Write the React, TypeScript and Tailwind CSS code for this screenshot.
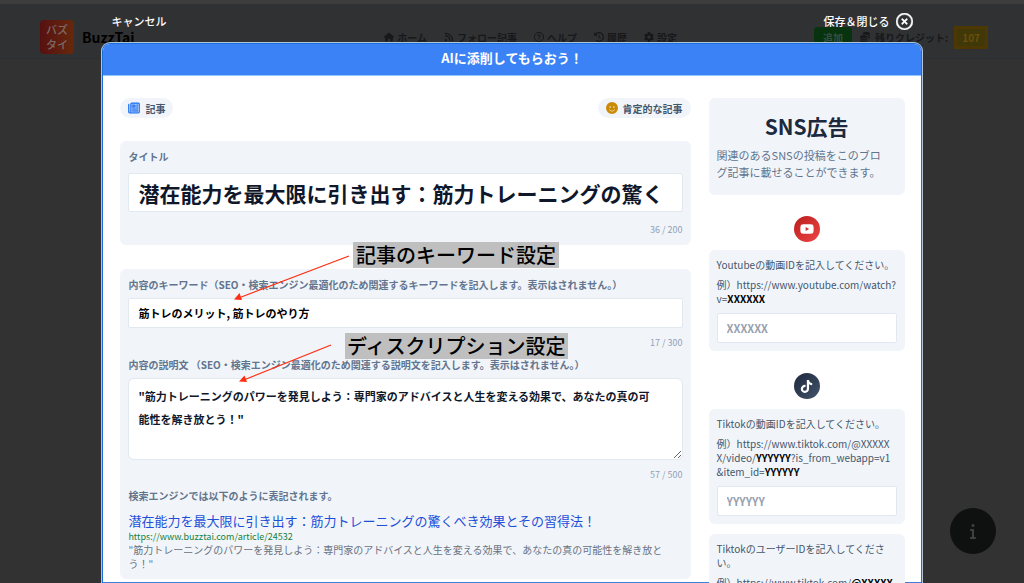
import type { ReactNode } from 'react'
import {
  FaCoins,
  FaGear,
  FaClockRotateLeft,
  FaHouse,
  FaInfo,
  FaRegCircleQuestion,
  FaRegCircleXmark,
  FaRegNewspaper,
  FaRss,
  FaFaceSmile,
  FaTiktok,
  FaYoutube,
} from 'react-icons/fa6'

const ARTICLE_TITLE = '潜在能力を最大限に引き出す：筋力トレーニングの驚くべき効果とその習得法！'
const ARTICLE_DESCRIPTION =
  '"筋力トレーニングのパワーを発見しよう：専門家のアドバイスと人生を変える効果で、あなたの真の可能性を解き放とう！"'

const navItems = [
  { label: 'ホーム', icon: FaHouse },
  { label: 'フォロー記事', icon: FaRss },
  { label: 'ヘルプ', icon: FaRegCircleQuestion },
  { label: '履歴', icon: FaClockRotateLeft },
  { label: '設定', icon: FaGear },
]

function SiteHeader() {
  return (
    <header className="flex items-center border-t-4 border-b border-t-[#3d3d3d] border-b-[#2c3036] bg-[#303133] pt-4 pr-9 pb-1 pl-10 text-[10px] font-bold text-[#17181a]">
      <a href="#" className="flex items-center gap-2">
        <span className="flex size-[34px] flex-col items-center justify-center rounded-sm bg-linear-to-r from-[#571010] to-[#66280c] text-[11px] leading-[15px] font-medium text-[#7d6a66]">
          <span>バズ</span>
          <span>タイ</span>
        </span>
        <span className="text-[14px] text-black">BuzzTai</span>
      </a>
      <nav className="mr-[137px] ml-auto flex gap-[17px]">
        {navItems.map(({ label, icon: Icon }) => (
          <a key={label} href="#" className="flex items-center gap-[3px]">
            <Icon className="size-[10px]" />
            {label}
          </a>
        ))}
      </nav>
      <div className="flex items-center">
        <button className="h-[20px] rounded-sm bg-[#07330f] px-[9px] text-[10px] text-[#3c4c3f]">追加</button>
        <FaCoins className="mr-[5px] ml-2 size-[10px]" />
        <span>残りクレジット:</span>
        <span className="ml-[6px] border-3 border-[#4d3803] bg-[#403808] px-[5px] py-[1px] text-[#6b4f0a]">
          107
        </span>
      </div>
    </header>
  )
}

function Pill({ children }: { children: ReactNode }) {
  return (
    <span className="flex h-5 items-center gap-[5px] rounded-full bg-slate-100 px-2 text-[10px] font-bold text-slate-600">
      {children}
    </span>
  )
}

function Counter({ children }: { children: ReactNode }) {
  return <p className="mt-2 text-right text-[9px] leading-[14px] text-slate-400">{children}</p>
}

type SnsFieldProps = {
  id: string
  label: string
  placeholder: string
  children: ReactNode
}

function SnsField({ id, label, placeholder, children }: SnsFieldProps) {
  return (
    <div className="rounded-md bg-slate-100 p-2 text-[10px] leading-[14px] text-slate-600">
      <label htmlFor={id} className="block">
        {label}
      </label>
      <p className="mt-[6px] break-all">{children}</p>
      <input
        id={id}
        placeholder={placeholder}
        className="mt-[7px] block h-[30px] w-full rounded-xs border border-slate-200 bg-white px-[9px] text-[11px] font-bold text-slate-900 placeholder:text-gray-400"
      />
    </div>
  )
}

function ArticleForm() {
  return (
    <div>
      <div className="flex justify-between">
        <Pill>
          <FaRegNewspaper className="size-3 stroke-current text-[#3b82f6] [stroke-width:24]" />
          記事
        </Pill>
        <Pill>
          <FaFaceSmile className="size-3 text-[#ca8a04]" />
          肯定的な記事
        </Pill>
      </div>

      <section className="mt-[23px] rounded-md bg-slate-100 p-2">
        <label htmlFor="title" className="block text-[10px] leading-4 font-bold text-slate-500">
          タイトル
        </label>
        <input
          id="title"
          defaultValue={ARTICLE_TITLE}
          className="mt-2 mb-[11px] block h-[39px] w-full rounded-xs border border-slate-200 bg-white pr-[18px] pl-[9px] text-[21px] font-bold text-slate-900"
        />
        <Counter>36 / 200</Counter>
      </section>

      <section className="mt-6 rounded-md bg-slate-100 p-2">
        <label htmlFor="keywords" className="block text-[10px] leading-4 font-bold text-slate-500">
          内容のキーワード（SEO・検索エンジン最適化のため関連するキーワードを記入します。表示はされません。）
        </label>
        <input
          id="keywords"
          defaultValue="筋トレのメリット, 筋トレのやり方"
          className="mt-[5px] block h-[30px] w-full rounded-xs border border-slate-200 bg-white px-[9px] text-[11px] font-bold text-black"
        />
        <Counter>17 / 300</Counter>

        <label htmlFor="description" className="mt-[7px] block text-[10px] leading-4 font-bold text-slate-500">
          内容の説明文 （SEO・検索エンジン最適化のため関連する説明文を記入します。表示はされません。）
        </label>
        <textarea
          id="description"
          defaultValue={ARTICLE_DESCRIPTION}
          className="mt-[5px] block h-[82px] w-full rounded-md border border-slate-200 bg-white py-[6px] pr-6 pl-[9px] text-[11px] leading-[23px] font-bold text-slate-900"
        />
        <Counter>57 / 500</Counter>

        <p className="mt-[6px] text-[10px] leading-4 font-bold text-slate-500">
          検索エンジンでは以下のように表記されます。
        </p>
        <a href="#" className="mt-[7px] block text-[13px] leading-5 text-[#1d4ed8]">
          {ARTICLE_TITLE}
        </a>
        <p className="text-[9px] leading-3 text-[#15803d]">https://www.buzztai.com/article/24532</p>
        <p className="text-[10px] leading-[14px] text-gray-500">{ARTICLE_DESCRIPTION}</p>
      </section>
    </div>
  )
}

function SnsSidebar() {
  return (
    <aside>
      <div className="rounded-md bg-slate-100 px-2 py-[14px]">
        <h2 className="text-center text-[21px] leading-7 font-bold text-slate-800">SNS広告</h2>
        <p className="mt-[7px] text-[11px] leading-[17px] text-slate-500">
          関連のあるSNSの投稿をこのブロ
          <br />
          グ記事に載せることができます。
        </p>
      </div>

      <div className="mx-auto mt-[21px] mb-2 flex size-[26px] items-center justify-center rounded-full bg-linear-to-br from-[#b91c1c] to-[#ef4444] text-white">
        <FaYoutube className="size-[14px]" />
      </div>
      <SnsField id="youtube" label="Youtubeの動画IDを記入してください。" placeholder="XXXXXX">
        例）https://www.youtube.com/watch?v=<b className="text-black">XXXXXX</b>
      </SnsField>

      <div className="mx-auto mt-[22px] mb-[10px] flex size-[26px] items-center justify-center rounded-full bg-linear-to-br from-slate-800 to-slate-600 text-white">
        <FaTiktok className="size-[13px]" />
      </div>
      <div className="flex flex-col gap-[10px]">
        <SnsField id="tiktok-video" label="Tiktokの動画IDを記入してください。" placeholder="YYYYYY">
          例）https://www.tiktok.com/@XXXXXX/video/<b className="text-black">YYYYYY</b>
          ?is_from_webapp=v1&amp;item_id=<b className="text-black">YYYYYY</b>
        </SnsField>
        <SnsField id="tiktok-user" label="TiktokのユーザーIDを記入してください。" placeholder="@XXXXXX">
          例）https://www.tiktok.com/<b className="text-black">@XXXXXX</b>
        </SnsField>
      </div>
    </aside>
  )
}

// Notes and arrows pinned on top of the form
function Annotations() {
  return (
    <>
      <svg className="pointer-events-none absolute top-0 left-0" width="700" height="400" fill="none">
        <g stroke="#ff2e12" strokeWidth="1.3">
          <path d="M349 256 L240 297.500" />
          <path d="M331 345 L245 379.500" />
        </g>
        <g fill="#ff2e12">
          <path d="M234 299.500 L239.500 293 L242 300 Z" />
          <path d="M239 381.500 L244.500 375.500 L247 382 Z" />
        </g>
      </svg>
      <p className="absolute top-[242px] left-[353px] bg-[#bfbfbf] px-[3px] text-[20px] leading-[26px] font-medium text-black">
        記事のキーワード設定
      </p>
      <p className="absolute top-[333px] left-[345px] bg-[#bfbfbf] px-[2px] text-[20px] leading-[26px] font-medium text-black">
        ディスクリプション設定
      </p>
    </>
  )
}

export default function App() {
  return (
    <div className="relative h-screen overflow-hidden bg-[#323232] font-['Noto_Sans_CJK_JP',sans-serif]">
      <SiteHeader />

      <button
        aria-label="情報"
        className="absolute right-7 bottom-[29px] flex size-[46px] items-center justify-center rounded-full bg-[#0f1110] text-[#3f4140]"
      >
        <FaInfo className="size-4" />
      </button>

      <div className="absolute inset-0 mx-auto flex w-4/5 flex-col" role="dialog" aria-modal="true">
        <div className="flex h-[43px] shrink-0 items-center justify-between px-[9px] text-[11px] font-medium text-white">
          <button>キャンセル</button>
          <button className="flex items-center gap-[6px]">
            保存＆閉じる
            <FaRegCircleXmark className="size-[17px] stroke-current [stroke-width:12]" />
          </button>
        </div>

        <div className="flex min-h-0 flex-1 flex-col overflow-hidden rounded-t-lg border-x border-t border-[#1a6fdc] bg-white shadow-[0_0_0_1px_#b4c4d8]">
          <h1 className="h-8 shrink-0 border-b border-[#93c5fd] bg-[#3b82f6] text-center text-[13px] leading-7 font-bold text-white">
            AIに添削してもらおう！
          </h1>
          <div className="grid min-h-0 flex-1 grid-cols-[minmax(0,1fr)_196px] gap-[18px] overflow-y-auto pt-[22px] pr-4 pl-[17px] shadow-[inset_0_-1px_0_#3b82d8] [scrollbar-width:none]">
            <ArticleForm />
            <SnsSidebar />
          </div>
        </div>
      </div>

      <Annotations />
    </div>
  )
}
